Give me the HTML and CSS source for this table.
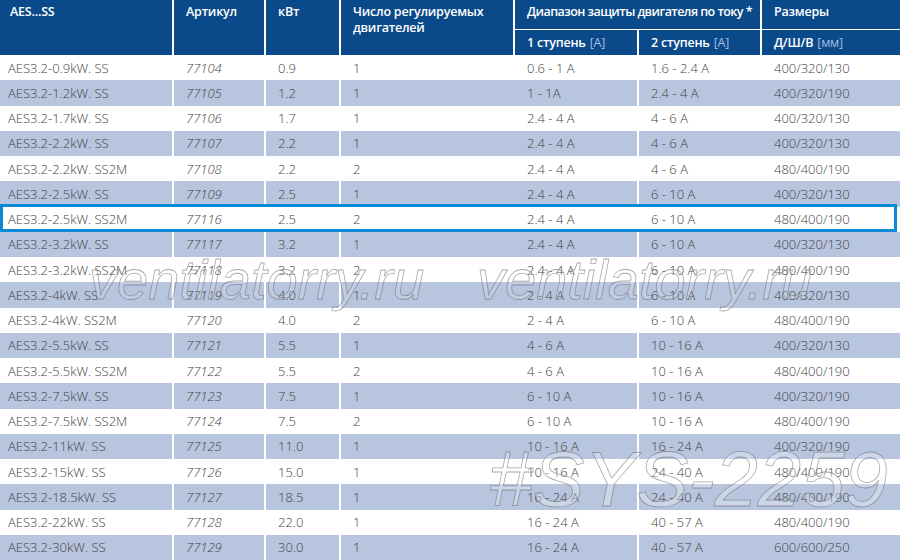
FILE: index.html
```html
<!DOCTYPE html>
<html lang="ru">
<head>
<meta charset="utf-8">
<title>AES...SS</title>
<link rel="stylesheet" href="styles.css">
</head>
<body>
<div class="page">
  <div class="thead">
    <div class="th c1 span2">AES...SS</div>
    <div class="th c2 span2">Артикул</div>
    <div class="th c3 span2">кВт</div>
    <div class="th c4 span2">Число регулируемых<br>двигателей</div>
    <div class="th c56">Диапазон защиты двигателя по току *</div>
    <div class="th c7">Размеры</div>
    <div class="th sub c5">1 ступень <span class="unit">[A]</span></div>
    <div class="th sub c6">2 ступень <span class="unit">[A]</span></div>
    <div class="th sub c7">Д/Ш/В <span class="unit">[мм]</span></div>
  </div>

  <div class="tbody">
    <div class="row"><div class="td">AES3.2-0.9kW. SS</div><div class="td sep art">77104</div><div class="td sep">0.9</div><div class="td sep">1</div><div class="td">0.6 - 1 A</div><div class="td sep">1.6 - 2.4 A</div><div class="td">400/320/130</div></div>
    <div class="row alt"><div class="td">AES3.2-1.2kW. SS</div><div class="td sep art">77105</div><div class="td sep">1.2</div><div class="td sep">1</div><div class="td">1 - 1A</div><div class="td sep">2.4 - 4 A</div><div class="td">400/320/190</div></div>
    <div class="row"><div class="td">AES3.2-1.7kW. SS</div><div class="td sep art">77106</div><div class="td sep">1.7</div><div class="td sep">1</div><div class="td">2.4 - 4 A</div><div class="td sep">4 - 6 A</div><div class="td">400/320/130</div></div>
    <div class="row alt"><div class="td">AES3.2-2.2kW. SS</div><div class="td sep art">77107</div><div class="td sep">2.2</div><div class="td sep">1</div><div class="td">2.4 - 4 A</div><div class="td sep">4 - 6 A</div><div class="td">400/320/130</div></div>
    <div class="row"><div class="td">AES3.2-2.2kW. SS2M</div><div class="td sep art">77108</div><div class="td sep">2.2</div><div class="td sep">2</div><div class="td">2.4 - 4 A</div><div class="td sep">4 - 6 A</div><div class="td">480/400/190</div></div>
    <div class="row alt"><div class="td">AES3.2-2.5kW. SS</div><div class="td sep art">77109</div><div class="td sep">2.5</div><div class="td sep">1</div><div class="td">2.4 - 4 A</div><div class="td sep">6 - 10 A</div><div class="td">400/320/130</div></div>
    <div class="row selected"><div class="td">AES3.2-2.5kW. SS2M</div><div class="td sep art">77116</div><div class="td sep">2.5</div><div class="td sep">2</div><div class="td">2.4 - 4 A</div><div class="td sep">6 - 10 A</div><div class="td">480/400/190</div></div>
    <div class="row alt"><div class="td">AES3.2-3.2kW. SS</div><div class="td sep art">77117</div><div class="td sep">3.2</div><div class="td sep">1</div><div class="td">2.4 - 4 A</div><div class="td sep">6 - 10 A</div><div class="td">400/320/130</div></div>
    <div class="row"><div class="td">AES3.2-3.2kW. SS2M</div><div class="td sep art">77118</div><div class="td sep">3.2</div><div class="td sep">2</div><div class="td">2.4 - 4 A</div><div class="td sep">6 - 10 A</div><div class="td">480/400/190</div></div>
    <div class="row alt"><div class="td">AES3.2-4kW. SS</div><div class="td sep art">77119</div><div class="td sep">4.0</div><div class="td sep">1</div><div class="td">2 - 4 A</div><div class="td sep">6 - 10 A</div><div class="td">400/320/130</div></div>
    <div class="row"><div class="td">AES3.2-4kW. SS2M</div><div class="td sep art">77120</div><div class="td sep">4.0</div><div class="td sep">2</div><div class="td">2 - 4 A</div><div class="td sep">6 - 10 A</div><div class="td">480/400/190</div></div>
    <div class="row alt"><div class="td">AES3.2-5.5kW. SS</div><div class="td sep art">77121</div><div class="td sep">5.5</div><div class="td sep">1</div><div class="td">4 - 6 A</div><div class="td sep">10 - 16 A</div><div class="td">400/320/130</div></div>
    <div class="row"><div class="td">AES3.2-5.5kW. SS2M</div><div class="td sep art">77122</div><div class="td sep">5.5</div><div class="td sep">2</div><div class="td">4 - 6 A</div><div class="td sep">10 - 16 A</div><div class="td">480/400/190</div></div>
    <div class="row alt"><div class="td">AES3.2-7.5kW. SS</div><div class="td sep art">77123</div><div class="td sep">7.5</div><div class="td sep">1</div><div class="td">6 - 10 A</div><div class="td sep">10 - 16 A</div><div class="td">400/320/190</div></div>
    <div class="row"><div class="td">AES3.2-7.5kW. SS2M</div><div class="td sep art">77124</div><div class="td sep">7.5</div><div class="td sep">2</div><div class="td">6 - 10 A</div><div class="td sep">10 - 16 A</div><div class="td">480/400/190</div></div>
    <div class="row alt"><div class="td">AES3.2-11kW. SS</div><div class="td sep art">77125</div><div class="td sep">11.0</div><div class="td sep">1</div><div class="td">10 - 16 A</div><div class="td sep">16 - 24 A</div><div class="td">400/320/190</div></div>
    <div class="row"><div class="td">AES3.2-15kW. SS</div><div class="td sep art">77126</div><div class="td sep">15.0</div><div class="td sep">1</div><div class="td">10 - 16 A</div><div class="td sep">24 - 40 A</div><div class="td">480/400/190</div></div>
    <div class="row alt"><div class="td">AES3.2-18.5kW. SS</div><div class="td sep art">77127</div><div class="td sep">18.5</div><div class="td sep">1</div><div class="td">16 - 24 A</div><div class="td sep">24 - 40 A</div><div class="td">480/400/190</div></div>
    <div class="row"><div class="td">AES3.2-22kW. SS</div><div class="td sep art">77128</div><div class="td sep">22.0</div><div class="td sep">1</div><div class="td">16 - 24 A</div><div class="td sep">40 - 57 A</div><div class="td">480/400/190</div></div>
    <div class="row alt"><div class="td">AES3.2-30kW. SS</div><div class="td sep art">77129</div><div class="td sep">30.0</div><div class="td sep">1</div><div class="td">16 - 24 A</div><div class="td sep">40 - 57 A</div><div class="td">600/600/250</div></div>
  </div>

  <div class="wm wm1">ventilatorry.ru</div>
  <div class="wm wm2">ventilatorry.ru</div>
  <div class="wm wm3">#SYS-2259</div>
</div>
</body>
</html>
```

FILE: styles.css
```css
html, body {
  margin: 0;
  padding: 0;
  background: #ffffff;
}

.page {
  position: relative;
  width: 900px;
  height: 560px;
  overflow: hidden;
  font-family: "Open Sans", "Liberation Sans", sans-serif;
}

.thead {
  display: grid;
  grid-template-columns: 172px 92px 75px 174px 124px 123px 1fr;
  grid-template-rows: 29px 26px;
  background: #ffffff;
}

.th {
  background: #0b4a8a;
  color: #ffffff;
  font-weight: 600;
  font-size: 12.5px;
  letter-spacing: -0.2px;
  line-height: 16px;
  padding: 4px 0 0 12px;
  border-left: 2px solid #ffffff;
  white-space: nowrap;
}

.th.c1 { border-left: 0; padding-left: 10px; grid-column: 1; }
.th.c2 { grid-column: 2; }
.th.c3 { grid-column: 3; }
.th.c4 { grid-column: 4; }
.th.span2 { grid-row: 1 / 3; }
.th.c56 { grid-column: 5 / 7; grid-row: 1; letter-spacing: -0.55px; }
.th.c7 { grid-column: 7; }
.th.c5 { grid-column: 5; }
.th.c6 { grid-column: 6; }

.th.sub {
  grid-row: 2;
  border-top: 1px solid #ffffff;
  padding-top: 0;
  display: flex;
  align-items: center;
}

.unit {
  font-weight: 400;
  color: #a9bde0;
  margin-left: 4px;
}

.row {
  display: grid;
  grid-template-columns: 172px 92px 75px 174px 124px 123px 1fr;
  height: 25.25px;
  background: #ffffff;
}

.row.alt {
  background: #b8c5df;
}

.td {
  display: flex;
  align-items: center;
  padding-left: 12px;
  border-left: 2px solid transparent;
  font-size: 13px;
  font-weight: 300;
  color: #444444;
  white-space: nowrap;
}

.td:first-child {
  border-left: 0;
  padding-left: 8px;
}

.td.sep {
  border-left-color: #ffffff;
}

.td.art {
  font-style: italic;
}

.row.selected {
  position: relative;
}

.row.selected::after {
  content: "";
  position: absolute;
  left: 0;
  right: 3px;
  top: -3px;
  bottom: 0;
  border: 3px solid #0a8ad8;
}

.wm {
  position: absolute;
  font-family: "Liberation Sans", Arial, sans-serif;
  font-style: italic;
  line-height: 1;
  white-space: nowrap;
  color: rgba(255, 255, 255, 0.15);
  -webkit-text-stroke: 0.8px rgba(110, 110, 110, 0.6);
  pointer-events: none;
}

.wm1, .wm2 {
  font-size: 56px;
  top: 252px;
}

.wm1 { left: 89px; }
.wm2 { left: 477px; }

.wm3 {
  font-size: 78px;
  left: 489px;
  top: 440px;
  color: rgba(255, 255, 255, 0.3);
}
```
